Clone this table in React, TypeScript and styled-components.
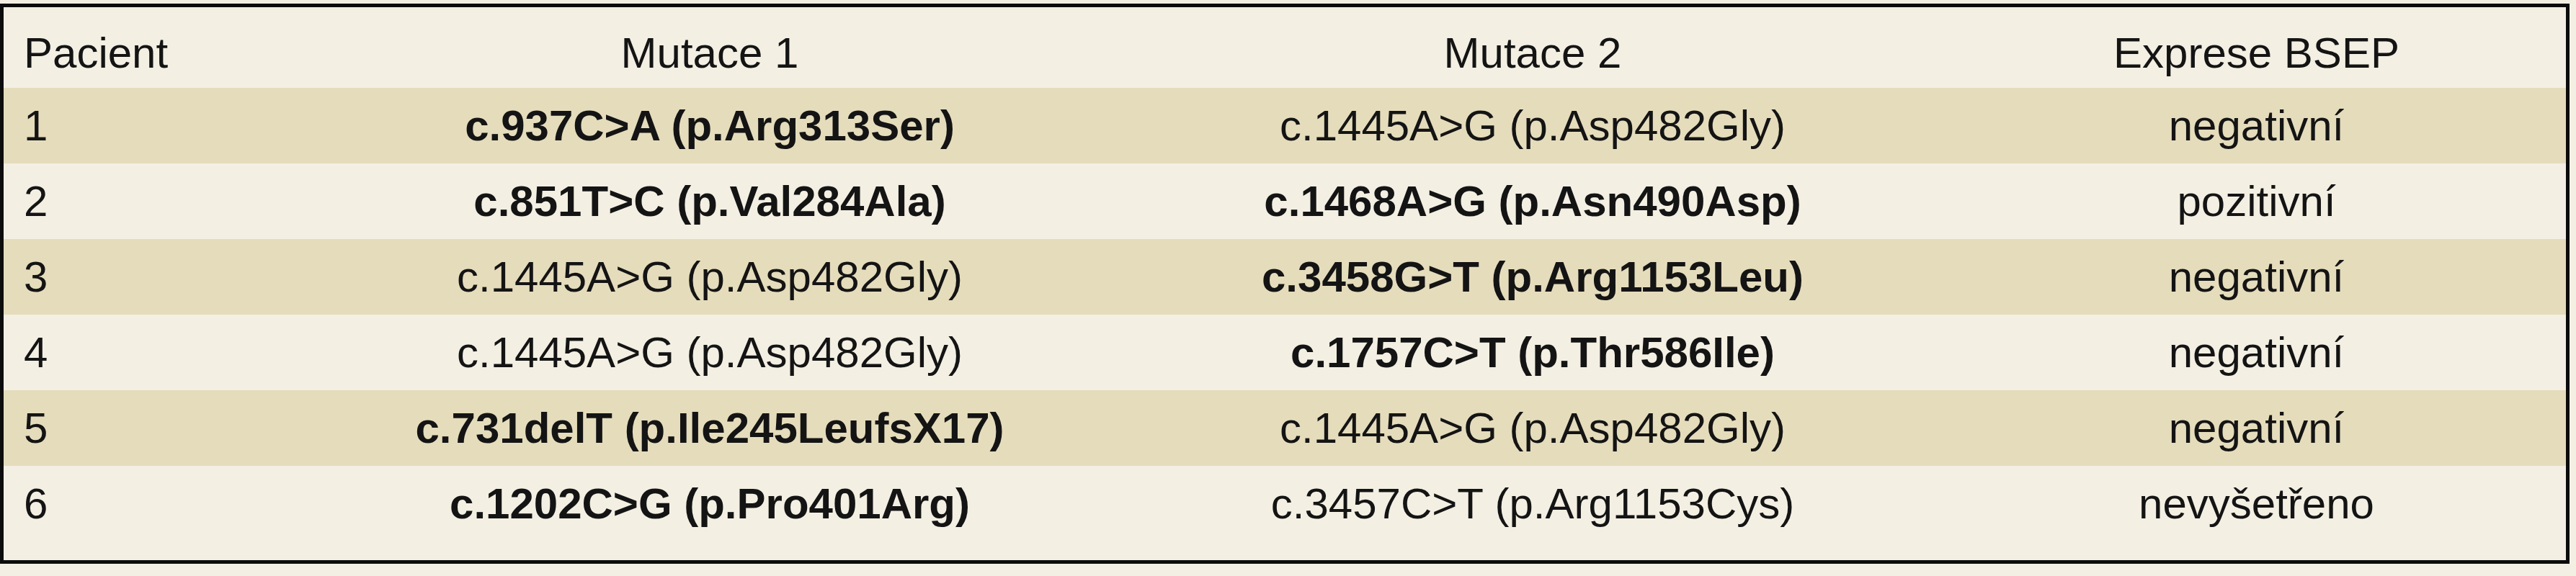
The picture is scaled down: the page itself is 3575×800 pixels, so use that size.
import React from 'react'
import styled, { createGlobalStyle } from 'styled-components'

const GlobalStyle = createGlobalStyle`
  html, body {
    margin: 0;
    padding: 0;
    background: #f3efe3;
  }
  body {
    font-family: 'Liberation Sans', Arial, sans-serif;
    color: #141414;
  }
`

const Page = styled.div`
  width: 3575px;
  height: 800px;
  padding-top: 5px;
  box-sizing: border-box;
  background: #f3efe3;
`
const Table = styled.div`
  width: 3566px;
  box-sizing: border-box;
  border: 5px solid #0c0c0c;
  background: #f3efe3;
  padding-bottom: 26px;
`
const Row = styled.div<{ $shaded?: boolean; $header?: boolean }>`
  display: grid;
  grid-template-columns: 413px 1134px 1150px 1fr;
  align-items: center;
  height: ${({ $header }) => ($header ? '112px' : '105px')};
  padding-top: ${({ $header }) => ($header ? '16px' : '0')};
  box-sizing: border-box;
  background: ${({ $shaded }) => ($shaded ? '#e5dcbc' : '#f3efe3')};
`
const Cell = styled.div<{ $bold?: boolean; $left?: boolean }>`
  font-size: 60px;
  line-height: 60px;
  white-space: nowrap;
  font-weight: ${({ $bold }) => ($bold ? 700 : 400)};
  text-align: ${({ $left }) => ($left ? 'left' : 'center')};
  padding-left: ${({ $left }) => ($left ? '28px' : '0')};
`

type Mutation = { text: string; bold?: boolean }
type Patient = { id: string; m1: Mutation; m2: Mutation; bsep: string }

const patients: Patient[] = [
  {
    id: '1',
    m1: { text: 'c.937C>A (p.Arg313Ser)', bold: true },
    m2: { text: 'c.1445A>G (p.Asp482Gly)' },
    bsep: 'negativní',
  },
  {
    id: '2',
    m1: { text: 'c.851T>C (p.Val284Ala)', bold: true },
    m2: { text: 'c.1468A>G (p.Asn490Asp)', bold: true },
    bsep: 'pozitivní',
  },
  {
    id: '3',
    m1: { text: 'c.1445A>G (p.Asp482Gly)' },
    m2: { text: 'c.3458G>T (p.Arg1153Leu)', bold: true },
    bsep: 'negativní',
  },
  {
    id: '4',
    m1: { text: 'c.1445A>G (p.Asp482Gly)' },
    m2: { text: 'c.1757C>T (p.Thr586Ile)', bold: true },
    bsep: 'negativní',
  },
  {
    id: '5',
    m1: { text: 'c.731delT (p.Ile245LeufsX17)', bold: true },
    m2: { text: 'c.1445A>G (p.Asp482Gly)' },
    bsep: 'negativní',
  },
  {
    id: '6',
    m1: { text: 'c.1202C>G (p.Pro401Arg)', bold: true },
    m2: { text: 'c.3457C>T (p.Arg1153Cys)' },
    bsep: 'nevyšetřeno',
  },
]

const App = (): JSX.Element => (
  <Page>
    <GlobalStyle />
    <Table>
      <Row $header>
        <Cell $left>Pacient</Cell>
        <Cell>Mutace 1</Cell>
        <Cell>Mutace 2</Cell>
        <Cell>Exprese BSEP</Cell>
      </Row>
      {patients.map((p, i) => (
        <Row key={p.id} $shaded={i % 2 === 0}>
          <Cell $left>{p.id}</Cell>
          <Cell $bold={p.m1.bold}>{p.m1.text}</Cell>
          <Cell $bold={p.m2.bold}>{p.m2.text}</Cell>
          <Cell>{p.bsep}</Cell>
        </Row>
      ))}
    </Table>
  </Page>
)

export default App
